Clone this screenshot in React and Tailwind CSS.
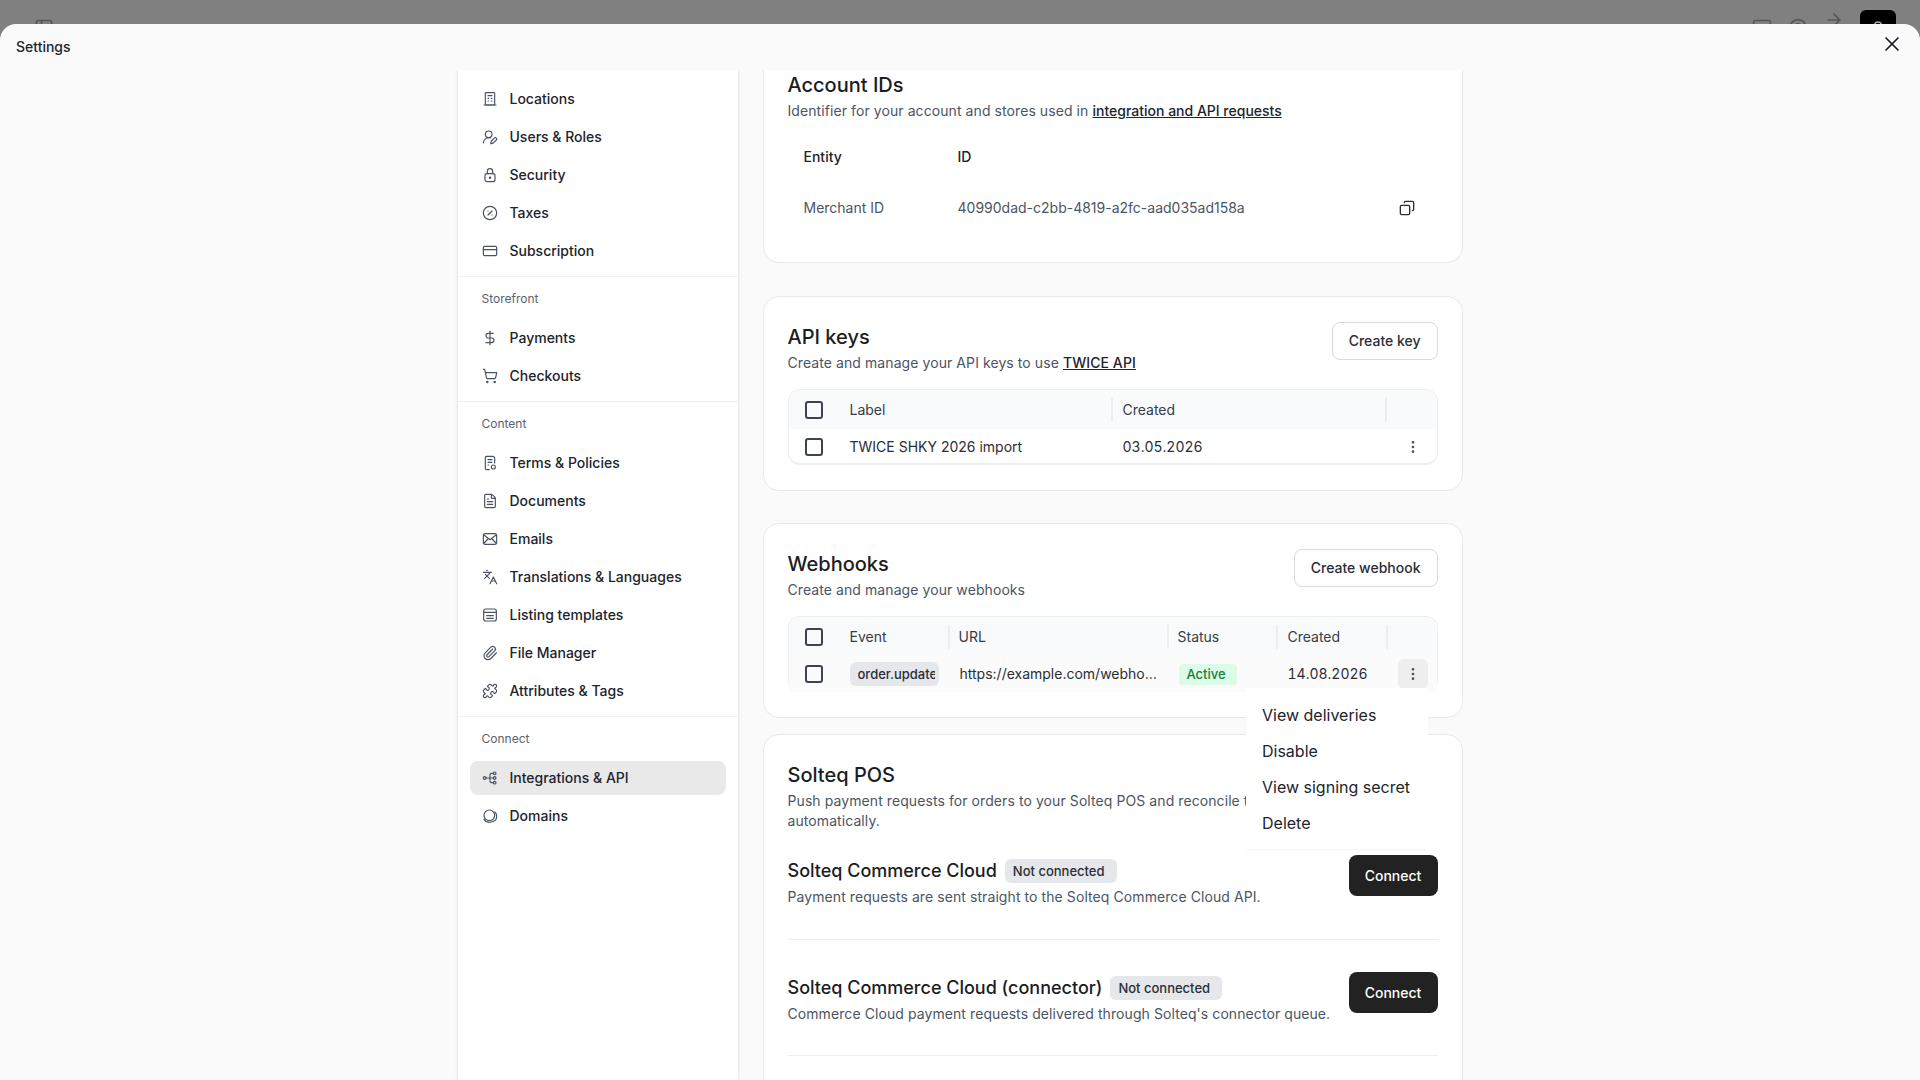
import {
  UserRoundPen,
  CirclePercent,
  CreditCard,
  DollarSign,
  ShoppingCart,
  FileText,
  Languages,
  Paperclip,
  Puzzle,
  Copy,
  EllipsisVertical,
  X,
  PanelLeft,
  MessageSquare,
  CircleHelp,
  ArrowRight,
  UserRound,
} from 'lucide-react'

const FONT = "font-['Inter','Liberation_Sans',sans-serif]"

const Svg = ({ size = 16, strokeWidth = 2, className, children }) => (
  <svg
    width={size}
    height={size}
    viewBox="0 0 24 24"
    fill="none"
    stroke="currentColor"
    strokeWidth={strokeWidth}
    strokeLinecap="round"
    strokeLinejoin="round"
    className={className}
  >
    {children}
  </svg>
)

const IconBuilding = (props) => (
  <Svg {...props}>
    <rect x="5" y="2.5" width="14" height="18.5" rx="1" />
    <path d="M3 21h18M9 7h6M9 11h1M14 11h1M9 15h1M14 15h1" />
  </Svg>
)

const IconLock = (props) => (
  <Svg {...props}>
    <rect x="4.5" y="10" width="15" height="12" rx="3" />
    <path d="M8 10V6.5a4 4 0 0 1 8 0V10" />
    <circle cx="12" cy="16" r="1" />
  </Svg>
)

const IconTerms = (props) => (
  <Svg {...props}>
    <path d="M11 22H7a2 2 0 0 1-2-2V4a2 2 0 0 1 2-2h9a3 3 0 0 1 3 3v7" />
    <path d="M9 7h6M9 11h6M9 15h1" />
    <circle cx="17" cy="18" r="3" />
  </Svg>
)

const IconMail = (props) => (
  <Svg {...props}>
    <rect x="2" y="4" width="20" height="16" rx="3" />
    <path d="m3 6 9 7 9-7M3 18l6-6M21 18l-6-6" />
  </Svg>
)

const IconListing = (props) => (
  <Svg {...props}>
    <rect x="2.5" y="3" width="19" height="18" rx="3" />
    <path d="M2.5 8h19M7 13h10M7 17h10" />
  </Svg>
)

const IconIntegrations = (props) => (
  <Svg {...props}>
    <circle cx="4" cy="12" r="2" />
    <circle cx="19" cy="5" r="2" />
    <circle cx="19" cy="12" r="2" />
    <circle cx="19" cy="19" r="2" />
    <path d="M6 12h11M12 12V7a2 2 0 0 1 2-2h3M12 12v5a2 2 0 0 0 2 2h3" />
  </Svg>
)

const IconDomains = (props) => (
  <Svg {...props}>
    <circle cx="11" cy="11" r="8" />
    <path d="M3 17c2 4 7 5 11 4s8-4 8-8c0-3-1-6-3-7" />
  </Svg>
)

const NAV = [
  { items: [
    { label: 'Locations', icon: IconBuilding },
    { label: 'Users & Roles', icon: UserRoundPen },
    { label: 'Security', icon: IconLock },
    { label: 'Taxes', icon: CirclePercent },
    { label: 'Subscription', icon: CreditCard },
  ] },
  { title: 'Storefront', items: [
    { label: 'Payments', icon: DollarSign },
    { label: 'Checkouts', icon: ShoppingCart },
  ] },
  { title: 'Content', items: [
    { label: 'Terms & Policies', icon: IconTerms },
    { label: 'Documents', icon: FileText },
    { label: 'Emails', icon: IconMail },
    { label: 'Translations & Languages', icon: Languages },
    { label: 'Listing templates', icon: IconListing },
    { label: 'File Manager', icon: Paperclip },
    { label: 'Attributes & Tags', icon: Puzzle },
  ] },
  { title: 'Connect', items: [
    { label: 'Integrations & API', icon: IconIntegrations, active: true },
    { label: 'Domains', icon: IconDomains },
  ] },
]

function Sidebar() {
  return (
    <aside className="w-[280px] shrink-0 self-stretch overflow-hidden bg-white shadow-[0_0_3px_rgba(0,0,0,0.16)]">
      {NAV.map((group, i) => (
        <div key={i} className={i === 0 ? 'px-3 pt-3 pb-2' : 'border-t border-[#f0f1f3] px-3 pt-[11px] pb-2'}>
          {group.title && (
            <div className="mb-[11px] flex h-[22px] items-center px-3 text-xs text-[#5b6270]">{group.title}</div>
          )}
          <div className="flex flex-col gap-1">
            {group.items.map(({ label, icon: Icon, active }) => (
              <div
                key={label}
                className={`flex h-[34px] items-center gap-3 rounded-lg px-3 text-sm font-medium text-[#20242c] ${active ? 'bg-[#e9e9ea]' : ''}`}
              >
                <Icon size={16} strokeWidth={1.75} className="shrink-0 text-[#4b5260]" />
                {label}
              </div>
            ))}
          </div>
        </div>
      ))}
    </aside>
  )
}

function Card({ className = '', children }) {
  return <section className={`rounded-2xl border border-[#e8e9eb] bg-white px-6 ${className}`}>{children}</section>
}

function Head({ title, children, action }) {
  return (
    <div className="flex items-start justify-between">
      <div className="pt-px">
        <h2 className="text-xl leading-7 font-[450] text-[#1a1d23]">{title}</h2>
        <p className="mt-[2px] text-sm leading-5 tracking-[0.08px] text-[#4b5563]">{children}</p>
      </div>
      {action && (
        <button className="h-[38px] rounded-lg border border-[#d8dade] bg-white px-4 text-sm font-medium text-[#2a2e35]">
          {action}
        </button>
      )}
    </div>
  )
}

function Check() {
  return <span className="block size-[18px] rounded-[3px] border-2 border-[#3d4350]" />
}

function HeaderCell({ className = '', children }) {
  return (
    <div className={`flex h-[24px] shrink-0 items-center border-r-2 border-[#eceef0] text-sm text-[#373c46] ${className}`}>
      {children}
    </div>
  )
}

function CheckCell() {
  return <div className="w-[61px] shrink-0 pl-4"><Check /></div>
}

function ApiKeys() {
  return (
    <Card className="mt-[33px] h-[195px] pt-[25px]">
      <Head title="API keys" action="Create key">
        Create and manage your API keys to use <span className="font-medium text-[#20242c] underline">TWICE API</span>
      </Head>
      <div className="mt-[16px] h-[76px] overflow-hidden rounded-xl border border-b-2 border-[#eceef0] bg-white">
        <div className="flex h-[39px] items-center bg-[#f9fafb]">
          <CheckCell />
          <HeaderCell className="w-[263px]">Label</HeaderCell>
          <HeaderCell className="w-[274px] pl-[10px]">Created</HeaderCell>
        </div>
        <div className="flex h-[36px] items-center text-sm text-[#2a2e35]">
          <CheckCell />
          <div className="w-[273px] shrink-0">TWICE SHKY 2026 import</div>
          <div className="w-[263px] shrink-0 tabular-nums">03.05.2026</div>
          <div className="flex flex-1 justify-center pl-[3px]"><EllipsisVertical size={16} className="text-[#4b5260]" /></div>
        </div>
      </div>
    </Card>
  )
}

function Webhooks() {
  return (
    <Card className="mt-[32px] h-[195px] pt-[25px]">
      <Head title="Webhooks" action="Create webhook">Create and manage your webhooks</Head>
      <div className="mt-[16px] h-[76px] rounded-xl border border-b-2 border-[#eceef0] bg-white">
        <div className="flex h-[39px] items-center rounded-t-xl bg-[#f9fafb]">
          <CheckCell />
          <HeaderCell className="w-[100px]">Event</HeaderCell>
          <HeaderCell className="w-[219px] pl-[9px]">URL</HeaderCell>
          <HeaderCell className="w-[109px] pl-[9px]">Status</HeaderCell>
          <HeaderCell className="w-[110px] pl-[10px]">Created</HeaderCell>
        </div>
        <div className="flex h-[36px] items-center bg-[#fbfbfb] text-sm text-[#2a2e35]">
          <CheckCell />
          <div className="w-[110px] shrink-0">
            <span className="flex h-6 w-[89px] items-center overflow-hidden rounded-md bg-[#e5e7eb] pl-2 pr-1 text-[13px] font-medium whitespace-nowrap text-[#2a2e35]">
              <span className="overflow-hidden">order.updated</span>
            </span>
          </div>
          <div className="w-[219px] shrink-0 truncate pr-[20px]">https://example.com/webhooks/order</div>
          <div className="w-[109px] shrink-0">
            <span className="inline-flex h-[21px] w-[58px] items-center rounded bg-[#dcfce7] pl-2 text-[13px] font-medium text-[#15803d]">Active</span>
          </div>
          <div className="w-[110px] shrink-0 tabular-nums">14.08.2026</div>
          <div className="flex w-[30px] shrink-0 justify-center">
            <span className="flex size-[30px] shrink-0 items-center justify-center rounded-md bg-[#eeeeef]">
              <EllipsisVertical size={16} className="text-[#4b5260]" />
            </span>
          </div>
        </div>
      </div>
    </Card>
  )
}

function Provider({ name, desc, className = '' }) {
  return (
    <div className={`flex items-start justify-between border-b border-[#eceef0] ${className}`}>
      <div className="pt-1">
        <div className="flex items-center gap-2">
          <h3 className="text-lg leading-6 font-[450] text-[#1a1d23]">{name}</h3>
          <span className="rounded-md bg-[#e5e7eb] py-1 pl-2 pr-3 text-[13px] leading-4 font-medium text-[#2a2e35]">Not connected</span>
        </div>
        <p className="mt-[4px] text-sm leading-5 tracking-[0.08px] text-[#4b5563]">{desc}</p>
      </div>
      <button className="h-[41px] w-[89px] rounded-lg bg-[#222222] text-sm font-medium text-white">Connect</button>
    </div>
  )
}

function Solteq() {
  return (
    <Card className="mt-[16px] h-[400px] pt-[26px]">
      <h2 className="text-xl leading-7 font-[450] text-[#1a1d23]">Solteq POS</h2>
      <p className="mt-[2px] text-sm leading-5 tracking-[0.08px] text-[#4b5563]">
        Push payment requests for orders to your Solteq POS and reconcile the status in TWICE
        <br />
        automatically.
      </p>
      <Provider
        className="mt-[24px] h-[85px]"
        name="Solteq Commerce Cloud"
        desc="Payment requests are sent straight to the Solteq Commerce Cloud API."
      />
      <Provider
        className="mt-[32px] h-[84px]"
        name="Solteq Commerce Cloud (connector)"
        desc="Commerce Cloud payment requests delivered through Solteq's connector queue."
      />
    </Card>
  )
}

export default function App() {
  return (
    <div className={`relative h-screen overflow-hidden bg-[#808080] ${FONT}`}>
      {/* dimmed page behind the dialog */}
      <div className="flex h-[46px] items-start justify-between pl-[34px] pr-6 pt-[10px] text-[#555]">
        <PanelLeft size={20} className="mt-2" />
        <div className="flex items-center gap-4">
          <MessageSquare size={20} />
          <CircleHelp size={20} />
          <ArrowRight size={20} className="-translate-y-2" />
          <span className="flex size-9 items-center justify-center rounded-md bg-black text-[#aaa]">
            <UserRound size={16} />
          </span>
        </div>
      </div>

      <div className="absolute inset-x-0 top-6 bottom-0 flex flex-col overflow-hidden rounded-t-2xl bg-[#fafafa]">
        <header className="flex h-[46px] shrink-0 items-center justify-between pl-4 pr-4">
          <span className="text-sm font-medium text-[#20242c]">Settings</span>
          <X size={24} strokeWidth={1.75} className="-mt-[6px] text-[#1a1d23]" />
        </header>

        <div className="flex min-h-0 flex-1 justify-center gap-[25px] overflow-hidden">
          <Sidebar />
          <main className="w-[700px] shrink-0 overflow-hidden">
            <Card className="-mt-px h-[194px] rounded-t-none border-t-0 pt-[2px]">
              <h2 className="text-xl leading-7 font-[450] text-[#1a1d23]">Account IDs</h2>
              <p className="mt-[2px] text-sm leading-5 tracking-[0.08px] text-[#4b5563]">
                Identifier for your account and stores used in{' '}
                <span className="font-medium tracking-normal text-[#20242c] underline">integration and API requests</span>
              </p>
              <div className="mt-[26px] flex text-sm text-[#20242c]">
                <div className="w-[170px] pl-4 font-medium">Entity</div>
                <div className="font-medium">ID</div>
              </div>
              <div className="mt-[31px] flex items-center text-sm text-[#4b5563]">
                <div className="w-[170px] pl-4">Merchant ID</div>
                <div className="flex-1">40990dad-c2bb-4819-a2fc-aad035ad158a</div>
                <Copy size={16} className="mr-[23px] -scale-x-100 text-[#2a2e35]" />
              </div>
            </Card>
            <ApiKeys />
            <Webhooks />
            <Solteq />
          </main>
        </div>
      </div>

      {/* row actions menu */}
      <div className="absolute left-[1246px] top-[688px] flex h-[161px] w-[182px] flex-col bg-white py-[9px] text-base text-[#20242c] shadow-[0_1px_1px_rgba(0,0,0,0.04)]">
        {['View deliveries', 'Disable', 'View signing secret', 'Delete'].map((item) => (
          <div key={item} className="flex h-9 shrink-0 items-center px-4">{item}</div>
        ))}
      </div>
    </div>
  )
}
